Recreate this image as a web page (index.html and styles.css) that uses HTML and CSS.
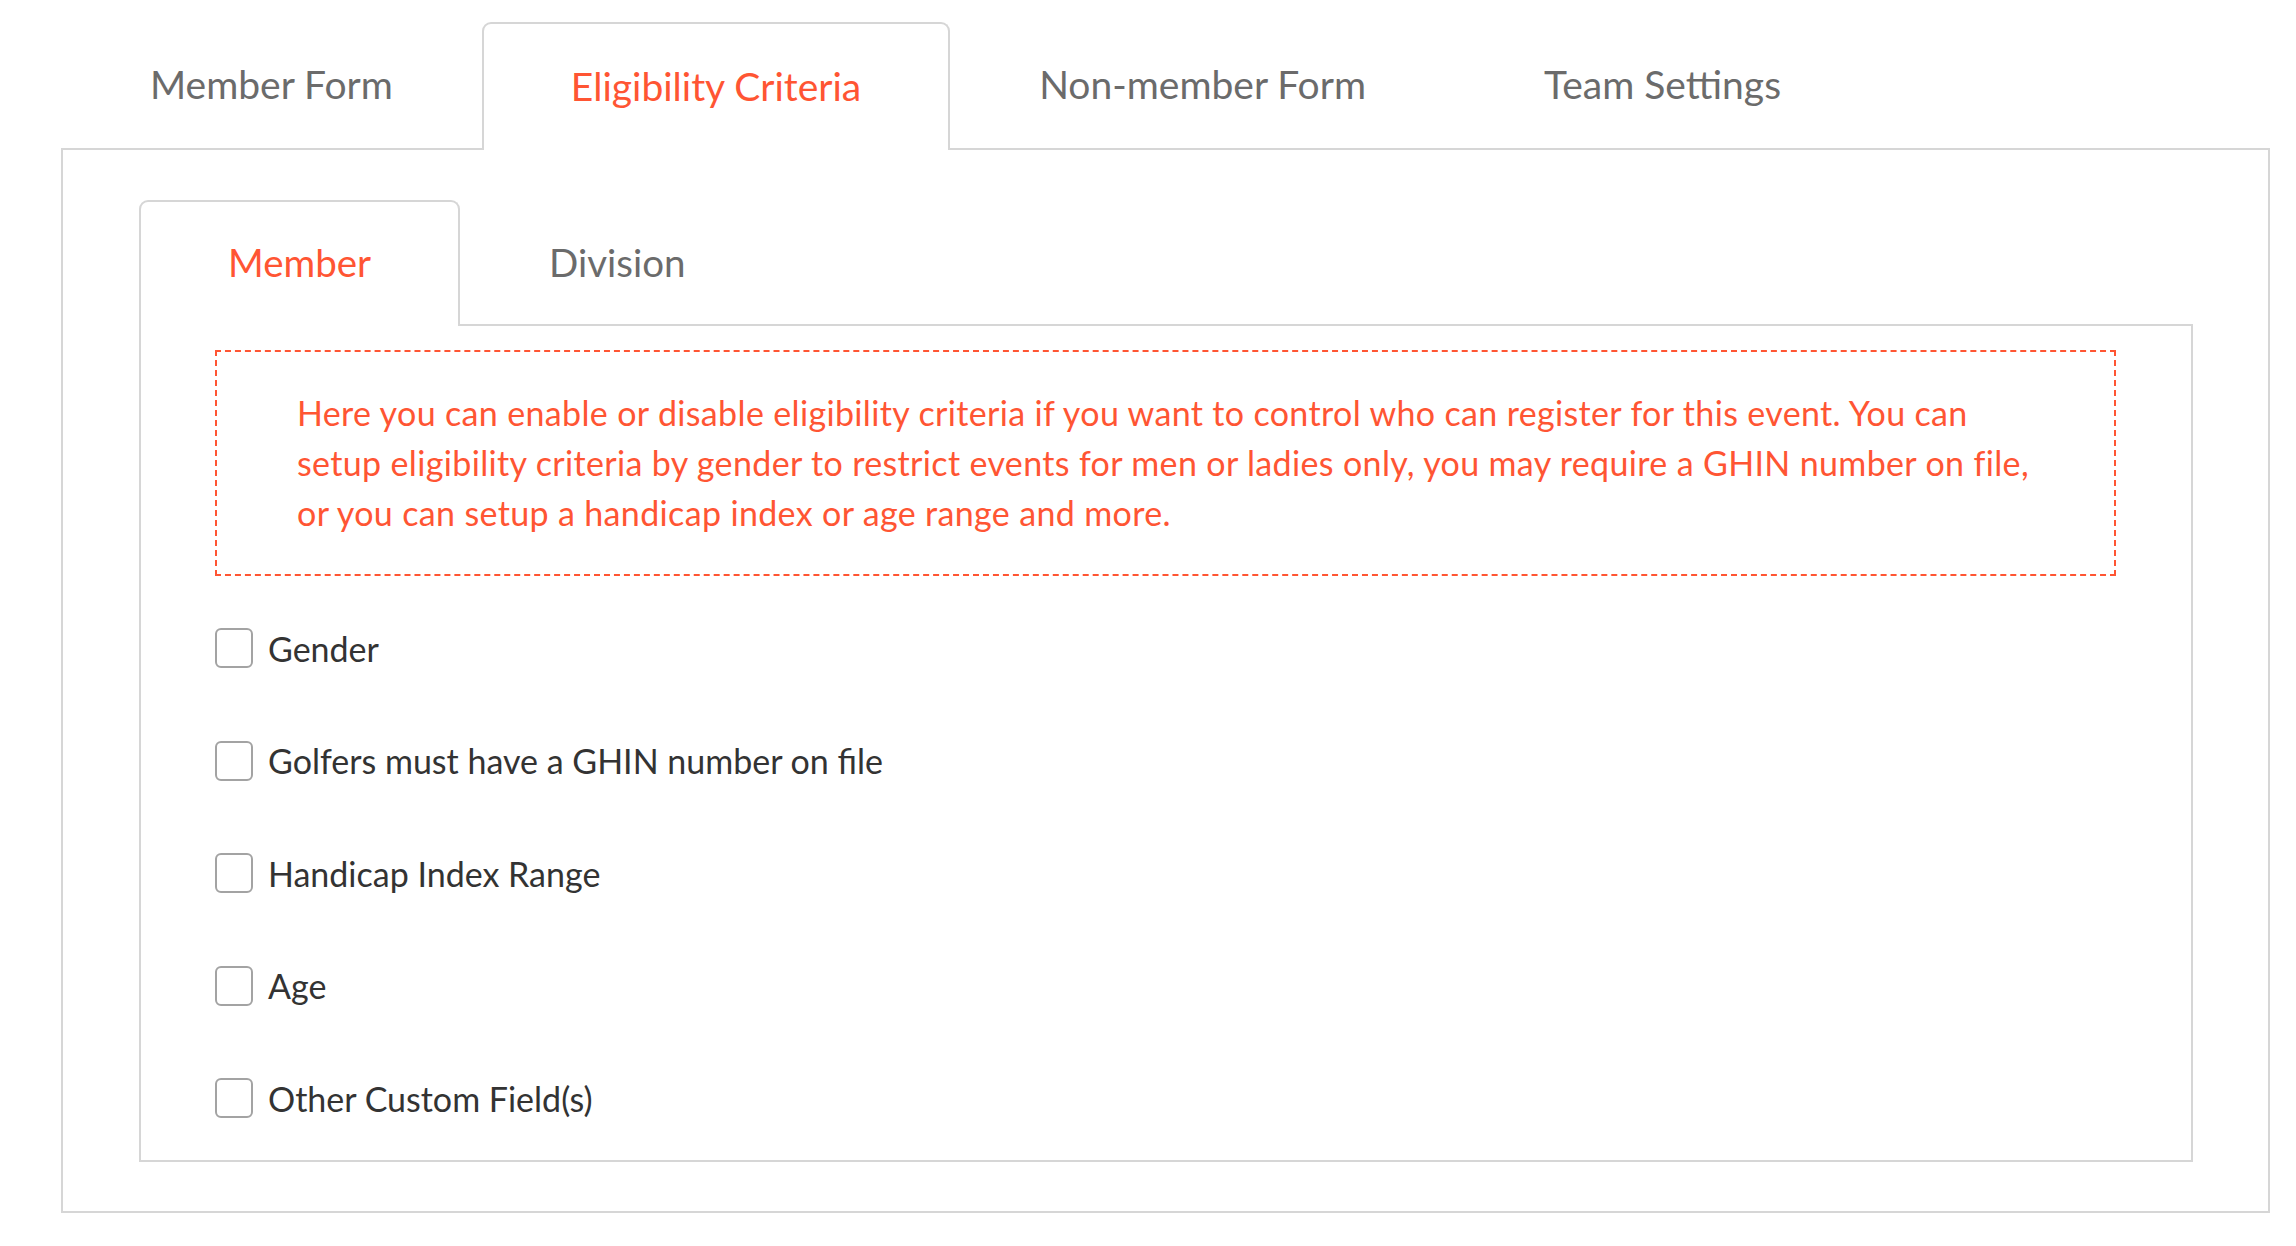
FILE: index.html
```html
<!DOCTYPE html>
<html lang="en">
<head>
  <meta charset="UTF-8" />
  <title>Eligibility Criteria</title>
  <link rel="stylesheet" href="styles.css">
</head>
<body>
  <ul class="tabs">
    <li class="tab">Member Form</li>
    <li class="tab active">Eligibility Criteria</li>
    <li class="tab">Non-member Form</li>
    <li class="tab">Team Settings</li>
  </ul>

  <div class="panel">
    <ul class="tabs sub-tabs">
      <li class="tab active">Member</li>
      <li class="tab">Division</li>
    </ul>

    <div class="sub-panel">
      <div class="notice">
        Here you can enable or disable eligibility criteria if you want to control who can register for this event. You can
        setup eligibility criteria by gender to restrict events for men or ladies only, you may require a GHIN number on file,
        or you can setup a handicap index or age range and more.
      </div>

      <div class="criteria">
        <label class="check"><input type="checkbox"><span class="box"></span>Gender</label>
        <label class="check"><input type="checkbox"><span class="box"></span>Golfers must have a GHIN number on file</label>
        <label class="check"><input type="checkbox"><span class="box"></span>Handicap Index Range</label>
        <label class="check"><input type="checkbox"><span class="box"></span>Age</label>
        <label class="check"><input type="checkbox"><span class="box"></span>Other Custom Field(s)</label>
      </div>
    </div>
  </div>
</body>
</html>
```

FILE: styles.css
```css
body {
  margin: 0;
  padding: 22px 26px 30px 61px;
  font-family: Lato, 'Open Sans', sans-serif;
  background: #fff;
  color: #333;
}
.tabs {
  list-style: none;
  margin: 0;
  padding: 0;
  display: flex;
  align-items: flex-end;
}
.tab {
  padding: 0 87px;
  height: 126px;
  line-height: 120px;
  font-size: 39px;
  color: #6b6b6b;
  border: 2px solid transparent;
  border-bottom: none;
  margin-bottom: -2px;
  position: relative;
  z-index: 1;
}
.tab.active {
  color: #ff5533;
  background: #fff;
  border-color: #d6d6d6;
  border-radius: 9px 9px 0 0;
  line-height: 124px;
}
.panel {
  border: 2px solid #d6d6d6;
  padding: 50px 75px 49px 76px;
}
.sub-tabs .tab {
  height: 124px;
  line-height: 120px;
  font-size: 38.5px;
}
.sub-tabs .tab.active {
  line-height: 120px;
}
.sub-panel {
  border: 2px solid #d6d6d6;
  padding: 24px 75px 42px 74px;
}
.notice {
  border: 2px dashed #ff5533;
  color: #ff5533;
  font-size: 34px;
  letter-spacing: 0.35px;
  line-height: 50px;
  padding: 36px 78px 36px 80px;
}
.criteria {
  display: flex;
  flex-direction: column;
  gap: 72.5px;
  margin-top: 52px;
}
.check {
  display: flex;
  align-items: center;
  height: 40px;
  font-size: 34px;
  color: #333;
}
.check input {
  display: none;
}
.box {
  width: 34px;
  height: 36px;
  border: 2px solid #a3a3a3;
  border-radius: 6px;
  margin-right: 15px;
  flex: none;
}
```
